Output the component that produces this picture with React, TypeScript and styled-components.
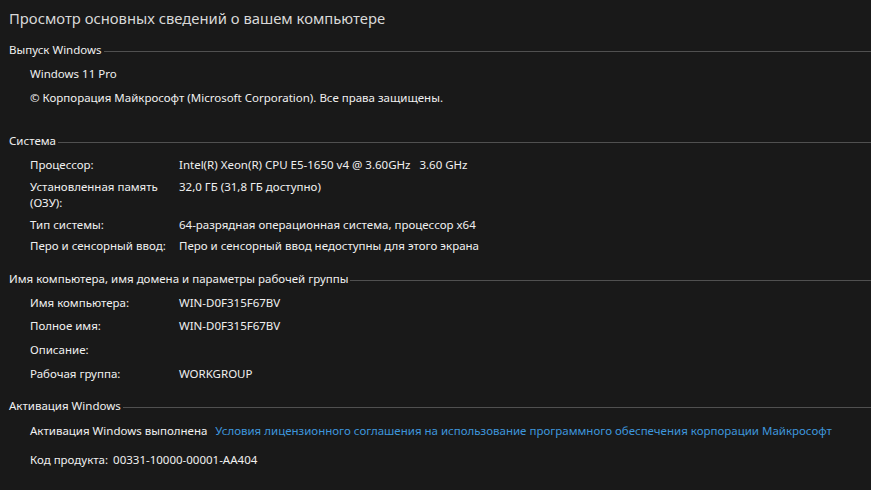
import styled, { createGlobalStyle } from "styled-components";

const Global = createGlobalStyle`
  html, body {
    margin: 0;
    padding: 0;
    background: #191919;
  }
  body {
    font-family: "Segoe UI", "Noto Sans", "Open Sans", sans-serif;
    font-size: 11.5px;
    color: #f0f0f0;
  }
`;

/* ===== LAYOUT ===== */

const Page = styled.main`
  width: 871px;
  height: 490px;
  overflow: hidden;
  background: #191919;
  padding: 7px 0 0 9px;
  box-sizing: border-box;
`;

const Title = styled.h1`
  margin: 0;
  font-size: 14.8px;
  font-weight: 400;
  line-height: 22px;
  color: #d8d8d8;
`;

const Section = styled.section<{ gap: number }>`
  margin-top: ${(p) => p.gap}px;
`;

const SectionHeader = styled.div`
  display: flex;
  align-items: center;
  gap: 2px;
  height: 18px;
  line-height: 18px;
  color: #f0f0f0;

  &::after {
    content: "";
    flex: 1;
    height: 1px;
    margin-top: 2px;
    background: #505050;
  }
`;

const Rows = styled.div<{ top: number }>`
  padding-left: 21px;
  margin-top: ${(p) => p.top}px;
`;

const Row = styled.div<{ h: number; multi?: boolean }>`
  display: grid;
  grid-template-columns: 149px 1fr;
  height: ${(p) => p.h}px;
  box-sizing: border-box;
  line-height: ${(p) => (p.multi ? "16px" : `${p.h}px`)};
  padding-top: ${(p) => (p.multi ? 3 : 0)}px;
`;

const Plain = styled.div<{ h: number; gap?: number }>`
  display: flex;
  align-items: flex-start;
  gap: ${(p) => p.gap ?? 0}px;
  height: ${(p) => p.h}px;
  line-height: 24px;
`;

const Label = styled.span`
  color: #f0f0f0;
  white-space: pre-line;
`;

const Value = styled.span`
  color: #f0f0f0;
  white-space: pre;
`;

const Link = styled.a`
  color: #3e96dc;
  text-decoration: none;
  cursor: pointer;
`;

/* ===== DATA ===== */

const system = [
  { label: "Процессор:", value: "Intel(R) Xeon(R) CPU E5-1650 v4 @ 3.60GHz   3.60 GHz", h: 22 },
  { label: "Установленная память\n(ОЗУ):", value: "32,0 ГБ (31,8 ГБ доступно)", h: 38, multi: true },
  { label: "Тип системы:", value: "64-разрядная операционная система, процессор x64", h: 21 },
  { label: "Перо и сенсорный ввод:", value: "Перо и сенсорный ввод недоступны для этого экрана", h: 22 },
];

const computer = [
  { label: "Имя компьютера:", value: "WIN-D0F315F67BV", h: 23 },
  { label: "Полное имя:", value: "WIN-D0F315F67BV", h: 24 },
  { label: "Описание:", value: "", h: 24 },
  { label: "Рабочая группа:", value: "WORKGROUP", h: 23 },
];

export default function App() {
  return (
    <Page>
      <Global />
      <Title>Просмотр основных сведений о вашем компьютере</Title>

      <Section gap={12}>
        <SectionHeader>Выпуск Windows</SectionHeader>
        <Rows top={3}>
          <Plain h={24}>Windows 11 Pro</Plain>
          <Plain h={24}>© Корпорация Майкрософт (Microsoft Corporation). Все права защищены.</Plain>
        </Rows>
      </Section>

      <Section gap={22}>
        <SectionHeader>Система</SectionHeader>
        <Rows top={4}>
          {system.map((r) => (
            <Row key={r.label} h={r.h} multi={r.multi}>
              <Label>{r.label}</Label>
              <Value>{r.value}</Value>
            </Row>
          ))}
        </Rows>
      </Section>

      <Section gap={13}>
        <SectionHeader>Имя компьютера, имя домена и параметры рабочей группы</SectionHeader>
        <Rows top={3}>
          {computer.map((r) => (
            <Row key={r.label} h={r.h}>
              <Label>{r.label}</Label>
              <Value>{r.value}</Value>
            </Row>
          ))}
        </Rows>
      </Section>

      <Section gap={12}>
        <SectionHeader>Активация Windows</SectionHeader>
        <Rows top={4}>
          <Plain h={29} gap={8}>
            <Label>Активация Windows выполнена</Label>
            <Link>
              Условия лицензионного соглашения на использование программного обеспечения корпорации Майкрософт
            </Link>
          </Plain>
          <Plain h={24} gap={5}>
            <Label>Код продукта:</Label>
            <Value>00331-10000-00001-AA404</Value>
          </Plain>
        </Rows>
      </Section>
    </Page>
  );
}
